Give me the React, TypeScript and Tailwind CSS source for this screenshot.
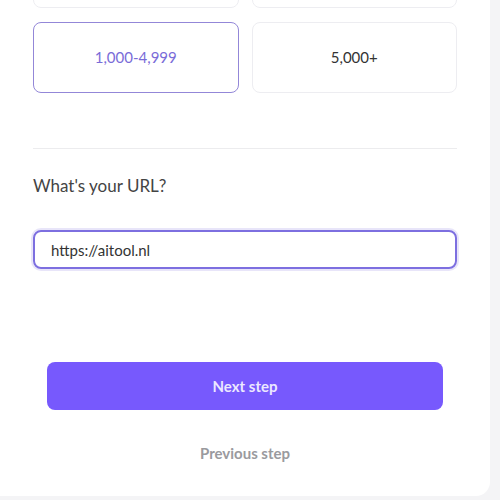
import React, { useState } from "react";

const sizes = ["1,000-4,999", "5,000+"];

export default function App() {
    const [selected, setSelected] = useState<string>("1,000-4,999");
    const [url, setUrl] = useState<string>("https://aitool.nl");

    return (
        <div className="w-[500px] h-[500px] overflow-hidden bg-[#f4f4f6] font-['Lato','Noto_Sans',sans-serif]">
            <div className="w-[490px] h-[496px] bg-white rounded-br-[14px] px-[33px] overflow-hidden">
                {/* Company size options (first row scrolled out of view) */}
                <div className="grid grid-cols-2 gap-x-[13px] gap-y-[14px] -mt-[63px]">
                    <div className="h-[71px] rounded-[8px] border border-[#ededf1]" />
                    <div className="h-[71px] rounded-[8px] border border-[#ededf1]" />
                    {sizes.map((size) => (
                        <button
                            key={size}
                            onClick={() => setSelected(size)}
                            className={`h-[71px] rounded-[8px] border text-[15px] ${selected === size
                                ? "border-[#9387d8] text-[#7a6cd8]"
                                : "border-[#ededf1] text-[#333]"
                                }`}
                        >
                            {size}
                        </button>
                    ))}
                </div>

                <hr className="mt-[55px] border-t border-[#ececee]" />

                <h2 className="mt-[25px] text-[17px] text-[#444] leading-[24px]">What's your URL?</h2>

                <input
                    value={url}
                    onChange={(e) => setUrl(e.target.value)}
                    className="mt-[32px] w-full h-[39px] rounded-[8px] border-2 border-[#7d6fe0] shadow-[0_0_0_2px_rgba(125,111,224,0.18)] px-[16px] text-[15px] text-[#333] outline-none"
                />

                <div className="px-[14px] mt-[93px]">
                    <button className="w-full h-[48px] rounded-[8px] bg-[#7759fd] text-[#ece8ff] text-[15px] font-bold">
                        Next step
                    </button>
                </div>

                <div className="mt-[31px] text-center">
                    <button className="text-[15px] font-bold text-[#9a9a9e]">Previous step</button>
                </div>
            </div>
        </div>
    );
}
